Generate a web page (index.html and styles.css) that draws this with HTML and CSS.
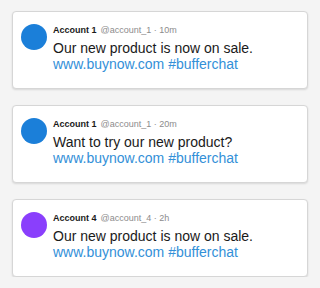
FILE: index.html
```html
<!DOCTYPE html>
<html>
<head>
<meta charset="utf-8">
<link rel="stylesheet" href="styles.css">
</head>
<body>
<div class="feed">
  <div class="card">
    <div class="avatar blue"></div>
    <div class="body">
      <div class="head"><span class="name">Account 1</span><span class="meta">@account_1 · 10m</span></div>
      <div class="text">Our new product is now on sale.<br><span class="link">www.buynow.com #bufferchat</span></div>
    </div>
  </div>
  <div class="card">
    <div class="avatar blue"></div>
    <div class="body">
      <div class="head"><span class="name">Account 1</span><span class="meta">@account_1 · 20m</span></div>
      <div class="text">Want to try our new product?<br><span class="link">www.buynow.com #bufferchat</span></div>
    </div>
  </div>
  <div class="card">
    <div class="avatar purple"></div>
    <div class="body">
      <div class="head"><span class="name">Account 4</span><span class="meta">@account_4 · 2h</span></div>
      <div class="text">Our new product is now on sale.<br><span class="link">www.buynow.com #bufferchat</span></div>
    </div>
  </div>
</div>
</body>
</html>
```
FILE: styles.css
```css
html, body {
  margin: 0;
  padding: 0;
  background: #f4f4f4;
  font-family: "Liberation Sans", Arial, sans-serif;
}
.feed {
  display: flex;
  flex-direction: column;
  gap: 16px;
  padding: 11px 12px 0 12px;
}
.card {
  display: flex;
  gap: 6px;
  height: 78px;
  box-sizing: border-box;
  padding: 12px 8px 0 8px;
  background: #fff;
  border: 1px solid #d6d6d6;
  border-radius: 4px;
  box-shadow: 0 1px 2px rgba(0,0,0,0.12);
}
.avatar {
  width: 26px;
  height: 26px;
  border-radius: 50%;
  flex: none;
}
.blue { background: #1b7fd9; }
.purple { background: #8a3ffc; }
.body {
  display: flex;
  flex-direction: column;
  gap: 4px;
}
.head {
  font-size: 9px;
  line-height: 12px;
  white-space: nowrap;
}
.name {
  font-weight: bold;
  color: #1a1a1a;
  margin-right: 4px;
}
.meta {
  color: #8c8c8c;
}
.text {
  font-size: 14px;
  line-height: 16px;
  color: #1a1a1a;
}
.link {
  color: #3390d8;
}
```
